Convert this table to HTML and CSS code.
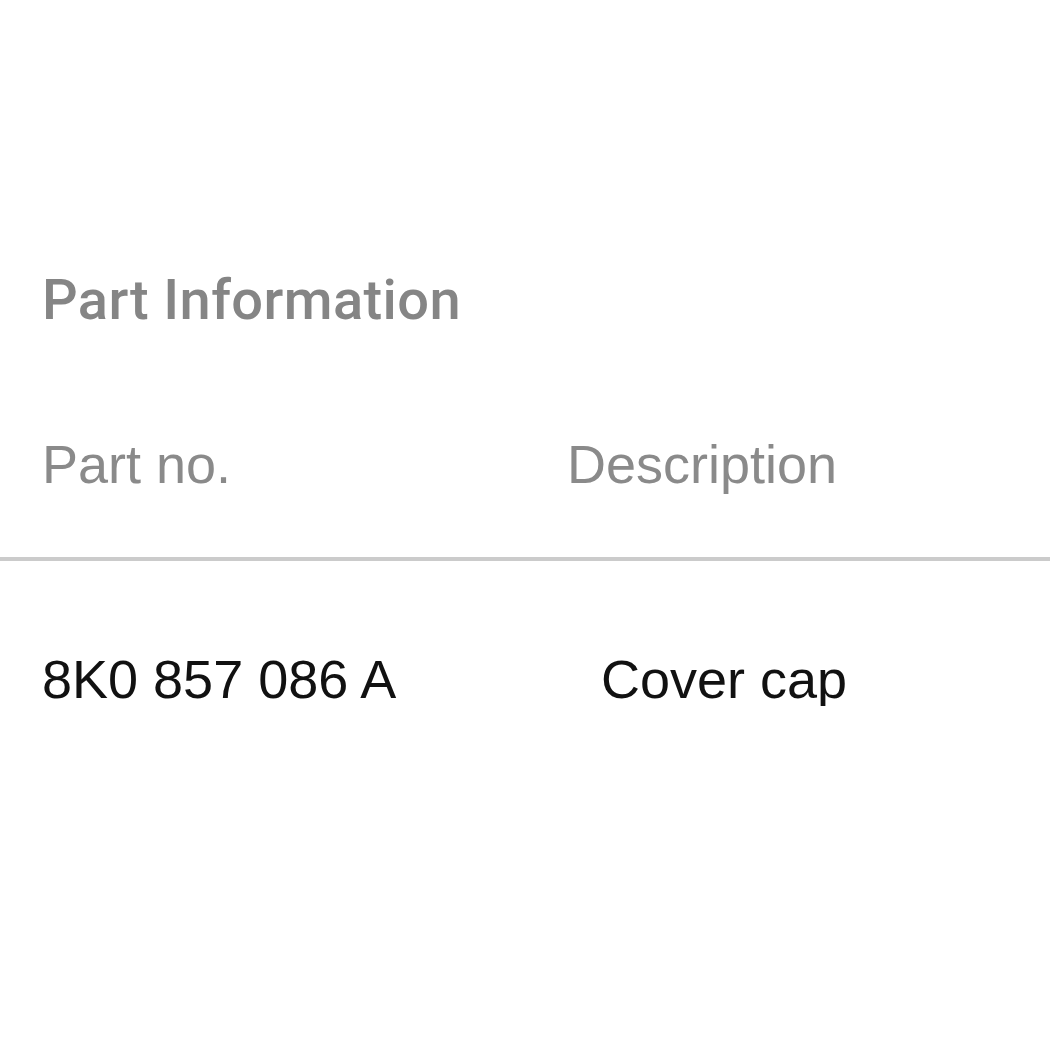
FILE: index.html
```html
<!DOCTYPE html>
<html>
<head>
<meta charset="utf-8">
<link rel="stylesheet" href="styles.css">
</head>
<body>
<main class="panel">
  <h2 class="title">Part Information</h2>
  <div class="table">
    <div class="row head">
      <div class="cell">Part no.</div>
      <div class="cell">Description</div>
    </div>
    <div class="row body">
      <div class="cell partno">8K0 857 086 A</div>
      <div class="cell desc">Cover cap</div>
    </div>
  </div>
</main>
</body>
</html>
```

FILE: styles.css
```css
html, body {
  margin: 0;
  padding: 0;
  background: #ffffff;
}
.panel {
  padding-top: 272px;
  font-family: "Liberation Sans", Arial, sans-serif;
}
.title {
  margin: 0 0 0 42px;
  font-family: Roboto, "Liberation Sans", sans-serif;
  font-weight: 500;
  font-size: 56px;
  line-height: 1;
  color: #858585;
  letter-spacing: 0.4px;
}
.table {
  margin-top: 109px;
}
.row {
  display: grid;
  grid-template-columns: 525px 1fr;
  padding-left: 42px;
  font-size: 54px;
  line-height: 1;
}
.head {
  color: #8a8a8a;
  padding-bottom: 66px;
  border-bottom: 4px solid #cbcbcb;
}
.body {
  color: #111111;
  padding-top: 91px;
}
.desc {
  padding-left: 34px;
}
```
